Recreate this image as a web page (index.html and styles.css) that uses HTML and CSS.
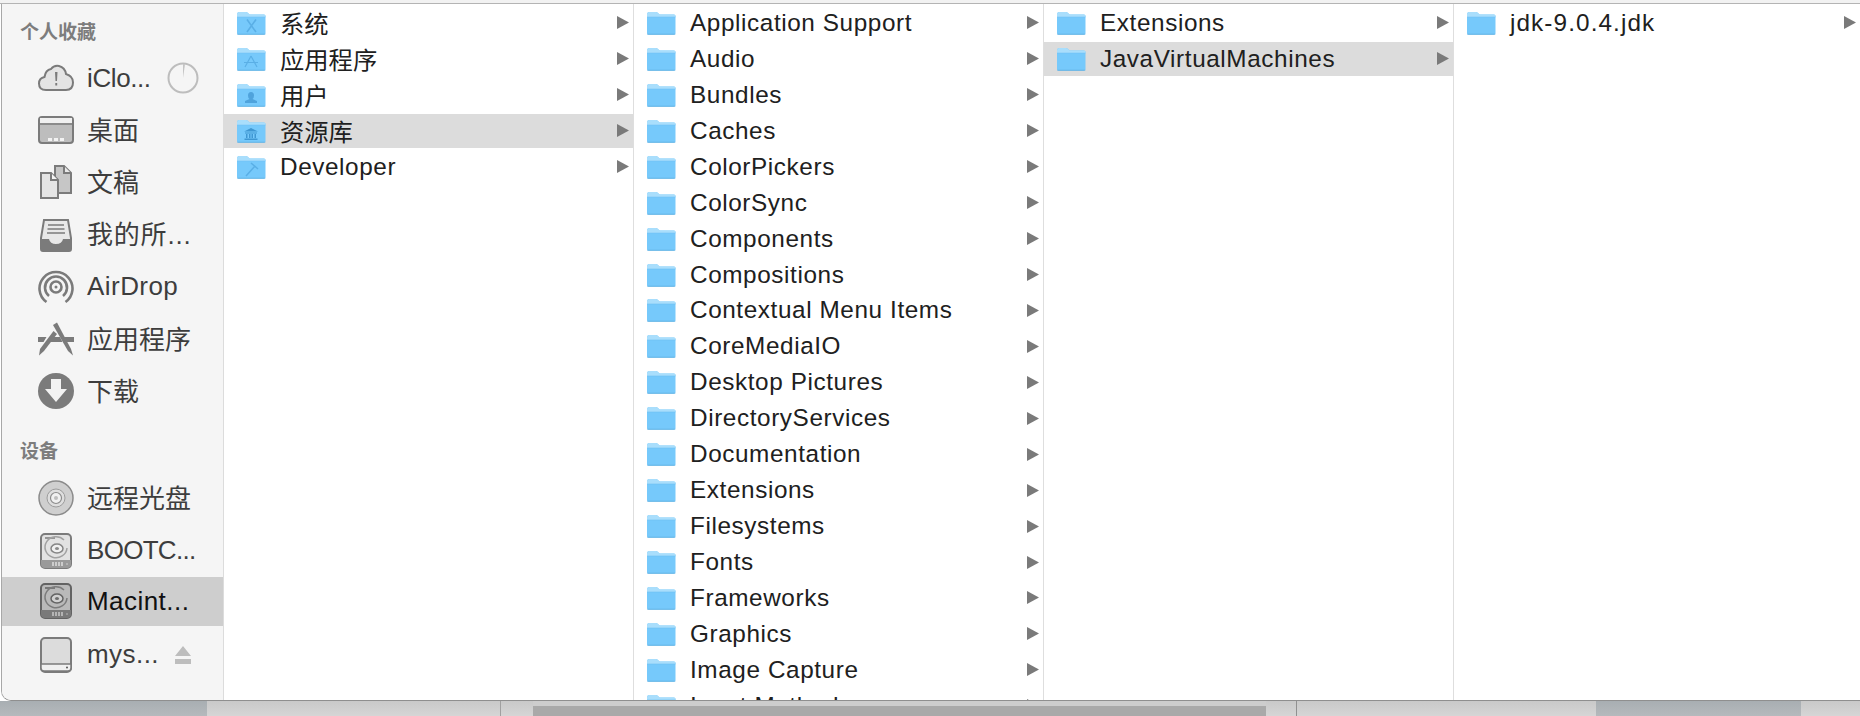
FILE: index.html
```html
<!DOCTYPE html>
<html lang="zh-CN">
<head>
<meta charset="utf-8">
<title>Finder</title>
<link rel="stylesheet" href="styles.css">
</head>
<body>
<svg class="defs" width="0" height="0" aria-hidden="true">
  <defs>
    <symbol id="folder" viewBox="0 0 30 24">
      <path d="M1 3.500Q1 1 3 1H10Q11.500 1 12.500 2.500L13.500 3.500H28Q29.500 3.500 29.500 5V22Q29.500 23.500 28 23.500H2.500Q1 23.500 1 22Z" fill="#76c9fb"/>
      <path d="M1 3.500Q1 1 3 1H10Q11.500 1 12.500 2.500L13.500 3.500H28Q29.500 3.500 29.500 5V6H1Z" fill="#a9defc"/>
      <path d="M1 5.700H29.500V6.300H1Z" fill="#6fc0f2"/>
      <path d="M1 22.800H29.500V23Q29.500 23.800 28 23.800H2.500Q1 23.800 1 23Z" fill="#62b2e4"/>
    </symbol>
    <symbol id="chev" viewBox="0 0 12 15"><path d="M0 1L12 7.500L0 14Z" fill="#7a7a7a"/></symbol>
    <symbol id="hdd" viewBox="0 0 36 36">
      <rect x="3" y="1" width="30" height="34" rx="4" fill="#e2e2e2" stroke="#7b7b7b" stroke-width="2"/>
      <path d="M7 5H17" stroke="#7b7b7b" stroke-width="1.500"/>
      <path d="M26 7A11 10.500 0 1 0 29 15" fill="none" stroke="#a2a2a2" stroke-width="1.500"/>
      <ellipse cx="19" cy="15.500" rx="6" ry="4.500" fill="#f0f0f0" stroke="#858585" stroke-width="1.500"/>
      <ellipse cx="19" cy="15.500" rx="2" ry="1.500" fill="#8b8b8b"/>
      <path d="M3 27H33V31Q33 35 29 35H7Q3 35 3 31Z" fill="#9a9a9a"/>
      <path d="M15 29V33M18 29V33M21 29V33M24 29V33M29 30.500V31.500" stroke="#f0f0f0" stroke-width="1.200"/>
    </symbol>
    <symbol id="hdd-on" viewBox="0 0 36 36">
      <rect x="3" y="1" width="30" height="34" rx="4" fill="#b9b9b9" stroke="#636363" stroke-width="2"/>
      <path d="M7 5H17" stroke="#636363" stroke-width="1.500"/>
      <path d="M26 7A11 10.500 0 1 0 29 15" fill="none" stroke="#7c7c7c" stroke-width="1.500"/>
      <ellipse cx="19" cy="15.500" rx="6" ry="4.500" fill="#d0d0d0" stroke="#636363" stroke-width="1.500"/>
      <ellipse cx="19" cy="15.500" rx="2" ry="1.500" fill="#6e6e6e"/>
      <path d="M3 27H33V31Q33 35 29 35H7Q3 35 3 31Z" fill="#7a7a7a"/>
      <path d="M15 29V33M18 29V33M21 29V33M24 29V33M29 30.500V31.500" stroke="#dcdcdc" stroke-width="1.200"/>
    </symbol>
  </defs>
</svg>
<div class="topstrip"></div>
<main class="window">
  <aside class="sidebar">
    <h2 class="group">个人收藏</h2>
    <div class="item">
      <svg class="ico" viewBox="0 0 36 28"><path d="M8 26Q1 26 1 19.500Q1 14 6.500 13Q7.500 6 13 5Q16 1 21 2Q27 3.500 28 10Q35 12 35 18.500Q35 26 28 26Z" fill="#e4e4e4" stroke="#7b7b7b" stroke-width="2"/><path d="M17 8H19.500L19 17H17.500ZM17.300 19H19.200V21.500H17.300Z" fill="#7b7b7b"/></svg>
      <span class="lbl lbl-snug">iClo...</span>
      <svg class="pie" viewBox="0 0 32 32"><circle cx="16" cy="16" r="14.500" fill="none" stroke="#bdbdbd" stroke-width="2"/><path d="M16 2L18 2.200L16 16Z" fill="#c4c4c4"/></svg>
    </div>
    <div class="item">
      <svg class="ico" viewBox="0 0 36 28"><rect x="1" y="1" width="34" height="26" rx="3" fill="#bdbdbd" stroke="#7b7b7b" stroke-width="2"/><path d="M2 2H34V7H2Z" fill="#f0f0f0"/><path d="M1 8H35" stroke="#7b7b7b" stroke-width="1.500"/><path d="M10 22H14V25H10ZM16 22H20V25H16ZM22 22H26V25H22Z" fill="#f2f2f2"/></svg>
      <span class="lbl cjk">桌面</span>
    </div>
    <div class="item">
      <svg class="ico" viewBox="0 0 36 34"><path d="M17 1H26L33 8V28H17Z" fill="#c6c6c6" stroke="#7b7b7b" stroke-width="2"/><path d="M26 1V8H33" fill="#e8e8e8" stroke="#7b7b7b" stroke-width="2"/><path d="M3 8H13L20 15V33H3Z" fill="#e4e4e4" stroke="#7b7b7b" stroke-width="2"/><path d="M13 8V15H20" fill="#f4f4f4" stroke="#7b7b7b" stroke-width="2"/></svg>
      <span class="lbl cjk">文稿</span>
    </div>
    <div class="item">
      <svg class="ico" viewBox="0 0 36 34"><path d="M6 2H30L33 20V31Q33 33 31 33H5Q3 33 3 31V20Z" fill="#e8e8e8" stroke="#7b7b7b" stroke-width="2"/><path d="M3 21H11Q12 26 18 26Q24 26 25 21H33V31Q33 33 31 33H5Q3 33 3 31Z" fill="#7b7b7b"/><path d="M10 7H26M9.500 11H26.500M9 15H27" stroke="#7b7b7b" stroke-width="1.500"/></svg>
      <span class="lbl cjk lbl-wide">我的所...</span>
    </div>
    <div class="item">
      <svg class="ico" viewBox="0 0 36 36" fill="none" stroke="#7b7b7b" stroke-width="2.600"><path d="M8.500 33A16.500 16.500 0 1 1 27.500 33"/><path d="M11 27A11 11 0 1 1 25 27"/><circle cx="18" cy="18" r="5.500"/><circle cx="18" cy="18" r="1.500" fill="#7b7b7b" stroke="none"/></svg>
      <span class="lbl">AirDrop</span>
    </div>
    <div class="item">
      <svg class="ico" viewBox="0 0 36 34"><path d="M15 3L19 0.500L33 27L35 33.500L30 29Z" fill="#7b7b7b"/><path d="M15.500 9L19 12L6 29L1 33.500L2 27Z" fill="#7b7b7b"/><path d="M0 15H8.500L5.500 20H0ZM11.500 15H22L24.500 20H8.500ZM26 15H36V20H28.500Z" fill="#7b7b7b"/></svg>
      <span class="lbl cjk">应用程序</span>
    </div>
    <div class="item">
      <svg class="ico" viewBox="0 0 36 36"><circle cx="18" cy="18" r="18" fill="#7b7b7b"/><path d="M13 6H23V16H29L18 29L7 16H13Z" fill="#f2f2f2"/></svg>
      <span class="lbl cjk">下载</span>
    </div>
    <h2 class="group group-next">设备</h2>
    <div class="item">
      <svg class="ico" viewBox="0 0 36 36"><circle cx="18" cy="18" r="17" fill="#cfcfcf" stroke="#8b8b8b" stroke-width="1.500"/><circle cx="18" cy="18" r="9" fill="#dedede" stroke="#9c9c9c"/><circle cx="18" cy="18" r="5.500" fill="#f0f0f0" stroke="#8b8b8b" stroke-width="1.200"/><circle cx="18" cy="18" r="2" fill="#bdbdbd"/></svg>
      <span class="lbl cjk">远程光盘</span>
    </div>
    <div class="item">
      <svg class="ico"><use href="#hdd"/></svg>
      <span class="lbl lbl-tight">BOOTC...</span>
    </div>
    <div class="item item-on">
      <svg class="ico"><use href="#hdd-on"/></svg>
      <span class="lbl">Macint...</span>
    </div>
    <div class="item">
      <svg class="ico" viewBox="0 0 36 36"><rect x="3" y="1" width="30" height="34" rx="4" fill="#dcdcdc" stroke="#7b7b7b" stroke-width="2"/><path d="M3 27H33V31Q33 34 30 34H6Q3 34 3 31Z" fill="#f0f0f0" stroke="#7b7b7b" stroke-width="1.500"/><circle cx="29" cy="30.500" r="1" fill="#555"/></svg>
      <span class="lbl">mys...</span>
      <svg class="eject" viewBox="0 0 16 18"><path d="M8 0L16 10H0ZM0 13H16V18H0Z" fill="#bdbdbd"/></svg>
    </div>
  </aside>

  <section class="col">
    <div class="row"><svg class="folder"><use href="#folder"/></svg><svg class="glyph" viewBox="0 0 30 24"><path d="M11 8.500L20 21M20 8.500L11 21" stroke="#5aafe6" stroke-width="1.600" fill="none"/></svg><span class="name cjk">系统</span><svg class="chev"><use href="#chev"/></svg></div>
    <div class="row"><svg class="folder"><use href="#folder"/></svg><svg class="glyph" viewBox="0 0 30 24"><path d="M15 9L9 20M15 9L21 20M8 15.500H22" stroke="#5aafe6" stroke-width="1.200" fill="none"/></svg><span class="name cjk">应用程序</span><svg class="chev"><use href="#chev"/></svg></div>
    <div class="row"><svg class="folder"><use href="#folder"/></svg><svg class="glyph" viewBox="0 0 30 24"><path d="M15 9Q18 9 18 12.500Q18 15 16.500 16L21 18V20H9V18L13.500 16Q12 15 12 12.500Q12 9 15 9Z" fill="#4fa3dc"/></svg><span class="name cjk">用户</span><svg class="chev"><use href="#chev"/></svg></div>
    <div class="row row-on"><svg class="folder"><use href="#folder"/></svg><svg class="glyph" viewBox="0 0 30 24"><path d="M15 9L22 12.500H8ZM9 13.500H21V14.500H9ZM10 15H11.500V19H10ZM13 15H14.500V19H13ZM15.500 15H17V19H15.500ZM18.500 15H20V19H18.500ZM8.500 19.500H21.500V21H8.500Z" fill="#3f97d2"/></svg><span class="name cjk">资源库</span><svg class="chev"><use href="#chev"/></svg></div>
    <div class="row"><svg class="folder"><use href="#folder"/></svg><svg class="glyph" viewBox="0 0 30 24"><path d="M10 21L19 11M15 8L22 14" stroke="#5aafe6" stroke-width="1.500" fill="none"/></svg><span class="name">Developer</span><svg class="chev"><use href="#chev"/></svg></div>
  </section>

  <section class="col">
    <div class="row"><svg class="folder"><use href="#folder"/></svg><span class="name">Application Support</span><svg class="chev"><use href="#chev"/></svg></div>
    <div class="row"><svg class="folder"><use href="#folder"/></svg><span class="name">Audio</span><svg class="chev"><use href="#chev"/></svg></div>
    <div class="row"><svg class="folder"><use href="#folder"/></svg><span class="name">Bundles</span><svg class="chev"><use href="#chev"/></svg></div>
    <div class="row"><svg class="folder"><use href="#folder"/></svg><span class="name">Caches</span><svg class="chev"><use href="#chev"/></svg></div>
    <div class="row"><svg class="folder"><use href="#folder"/></svg><span class="name">ColorPickers</span><svg class="chev"><use href="#chev"/></svg></div>
    <div class="row"><svg class="folder"><use href="#folder"/></svg><span class="name">ColorSync</span><svg class="chev"><use href="#chev"/></svg></div>
    <div class="row"><svg class="folder"><use href="#folder"/></svg><span class="name">Components</span><svg class="chev"><use href="#chev"/></svg></div>
    <div class="row"><svg class="folder"><use href="#folder"/></svg><span class="name">Compositions</span><svg class="chev"><use href="#chev"/></svg></div>
    <div class="row"><svg class="folder"><use href="#folder"/></svg><span class="name">Contextual Menu Items</span><svg class="chev"><use href="#chev"/></svg></div>
    <div class="row"><svg class="folder"><use href="#folder"/></svg><span class="name">CoreMediaIO</span><svg class="chev"><use href="#chev"/></svg></div>
    <div class="row"><svg class="folder"><use href="#folder"/></svg><span class="name">Desktop Pictures</span><svg class="chev"><use href="#chev"/></svg></div>
    <div class="row"><svg class="folder"><use href="#folder"/></svg><span class="name">DirectoryServices</span><svg class="chev"><use href="#chev"/></svg></div>
    <div class="row"><svg class="folder"><use href="#folder"/></svg><span class="name">Documentation</span><svg class="chev"><use href="#chev"/></svg></div>
    <div class="row"><svg class="folder"><use href="#folder"/></svg><span class="name">Extensions</span><svg class="chev"><use href="#chev"/></svg></div>
    <div class="row"><svg class="folder"><use href="#folder"/></svg><span class="name">Filesystems</span><svg class="chev"><use href="#chev"/></svg></div>
    <div class="row"><svg class="folder"><use href="#folder"/></svg><span class="name">Fonts</span><svg class="chev"><use href="#chev"/></svg></div>
    <div class="row"><svg class="folder"><use href="#folder"/></svg><span class="name">Frameworks</span><svg class="chev"><use href="#chev"/></svg></div>
    <div class="row"><svg class="folder"><use href="#folder"/></svg><span class="name">Graphics</span><svg class="chev"><use href="#chev"/></svg></div>
    <div class="row"><svg class="folder"><use href="#folder"/></svg><span class="name">Image Capture</span><svg class="chev"><use href="#chev"/></svg></div>
    <div class="row"><svg class="folder"><use href="#folder"/></svg><span class="name">Input Methods</span><svg class="chev"><use href="#chev"/></svg></div>
  </section>

  <section class="col">
    <div class="row"><svg class="folder"><use href="#folder"/></svg><span class="name">Extensions</span><svg class="chev"><use href="#chev"/></svg></div>
    <div class="row row-on"><svg class="folder"><use href="#folder"/></svg><span class="name">JavaVirtualMachines</span><svg class="chev"><use href="#chev"/></svg></div>
  </section>

  <section class="col col-last">
    <div class="row"><svg class="folder"><use href="#folder"/></svg><span class="name name-wide">jdk-9.0.4.jdk</span><svg class="chev"><use href="#chev"/></svg></div>
  </section>
</main>
<footer class="backdrop">
  <div class="seg seg-blue seg-a"></div>
  <div class="seg seg-light seg-b"></div>
  <div class="seg seg-light seg-c"></div>
  <div class="seg seg-dark seg-d"></div>
  <div class="seg seg-light seg-e"></div>
  <div class="seg seg-light seg-f"></div>
  <div class="seg seg-blue seg-g"></div>
  <div class="seg seg-light seg-h"></div>
</footer>
</body>
</html>
```

FILE: styles.css
```css
html, body {
  margin: 0;
  padding: 0;
  height: 716px;
  overflow: hidden;
  background: #fff;
}
body {
  display: flex;
  flex-direction: column;
  font-family: "Liberation Sans", "Noto Sans CJK SC", sans-serif;
}
.defs { position: absolute; }
.topstrip {
  height: 3px;
  flex: none;
  background: #f2f2f2;
  border-bottom: 1px solid #b4b4b4;
}
.window {
  flex: none;
  height: 696px;
  display: flex;
  overflow: hidden;
  background: #fff;
  border-bottom: 1px solid #8f8f8f;
  border-left: 1px solid #a8a8a8;
  margin-left: 1px;
  border-bottom-left-radius: 10px;
}
.sidebar {
  flex: none;
  width: 222px;
  background: #f5f5f5;
  border-right: 1px solid #dcdcdc;
  padding-top: 12px;
  box-sizing: border-box;
}
.group {
  margin: 0 0 2px 18px;
  height: 34px;
  line-height: 34px;
  font-size: 19px;
  font-weight: 700;
  color: #7d7d7d;
}
.group-next { margin-top: 18px; margin-bottom: 3px; }
.item {
  height: 52.2px;
  box-sizing: border-box;
  display: flex;
  align-items: center;
  padding-left: 36px;
}
.item-on {
  background: #cecece;
  background-clip: padding-box;
  border-bottom: 3px solid transparent;
}
.ico {
  width: 36px;
  height: 36px;
  flex: none;
  margin-right: 13px;
}
.lbl {
  font-size: 26px;
  letter-spacing: 0.45px;
  color: #3d3d3d;
  white-space: nowrap;
}
.lbl.cjk {
  letter-spacing: 0;
  line-height: 30px;
  padding-top: 1px;
}
.lbl.lbl-wide { letter-spacing: 0.8px; }
.lbl-tight { letter-spacing: -0.7px; }
.lbl-snug { letter-spacing: -0.4px; }
.item-on .lbl { color: #111; }
.pie {
  width: 32px;
  height: 32px;
  margin-left: auto;
  margin-right: 24px;
}
.eject {
  width: 16px;
  height: 18px;
  margin-left: auto;
  margin-right: 32px;
}
.col {
  flex: none;
  width: 410px;
  box-sizing: border-box;
  padding-top: 1px;
  border-right: 1px solid #dedede;
  overflow: hidden;
}
.col-last { flex: 1; border-right: 0; }
.row {
  height: 35.94px;
  box-sizing: border-box;
  display: flex;
  align-items: center;
  position: relative;
  padding-left: 12px;
  padding-right: 4px;
}
.row-on {
  background: #dcdcdc;
  background-clip: padding-box;
  border-top: 1px solid transparent;
  border-bottom: 1px solid transparent;
}
.folder {
  width: 30px;
  height: 24px;
  flex: none;
  margin-right: 14px;
}
.glyph {
  position: absolute;
  left: 12px;
  width: 30px;
  height: 24px;
}
.name {
  font-size: 24.3px;
  letter-spacing: 0.6px;
  color: #202020;
  white-space: nowrap;
}
.name.cjk {
  letter-spacing: 0;
  line-height: 28px;
  padding-top: 4px;
}
.name-wide { letter-spacing: 1.1px; }
.chev {
  width: 12px;
  height: 15px;
  flex: none;
  margin-left: auto;
}
.backdrop {
  flex: none;
  height: 16px;
  display: flex;
}
.seg { height: 16px; }
.seg-blue { background: linear-gradient(#a8aeb2, #b6babd); }
.seg-light { background: linear-gradient(#c9c9c9, #d6d6d6); }
.seg-dark {
  background: #a9a9a9;
  border-top: 5px solid #cdcdcd;
  box-sizing: border-box;
}
.seg-a { width: 207px; }
.seg-b { width: 293px; border-right: 1px solid #a0a0a0; }
.seg-c { width: 32px; }
.seg-d { width: 733px; }
.seg-e { width: 30px; border-right: 1px solid #909090; }
.seg-f { width: 299px; }
.seg-g { width: 205px; }
.seg-h { flex: 1; }
```
